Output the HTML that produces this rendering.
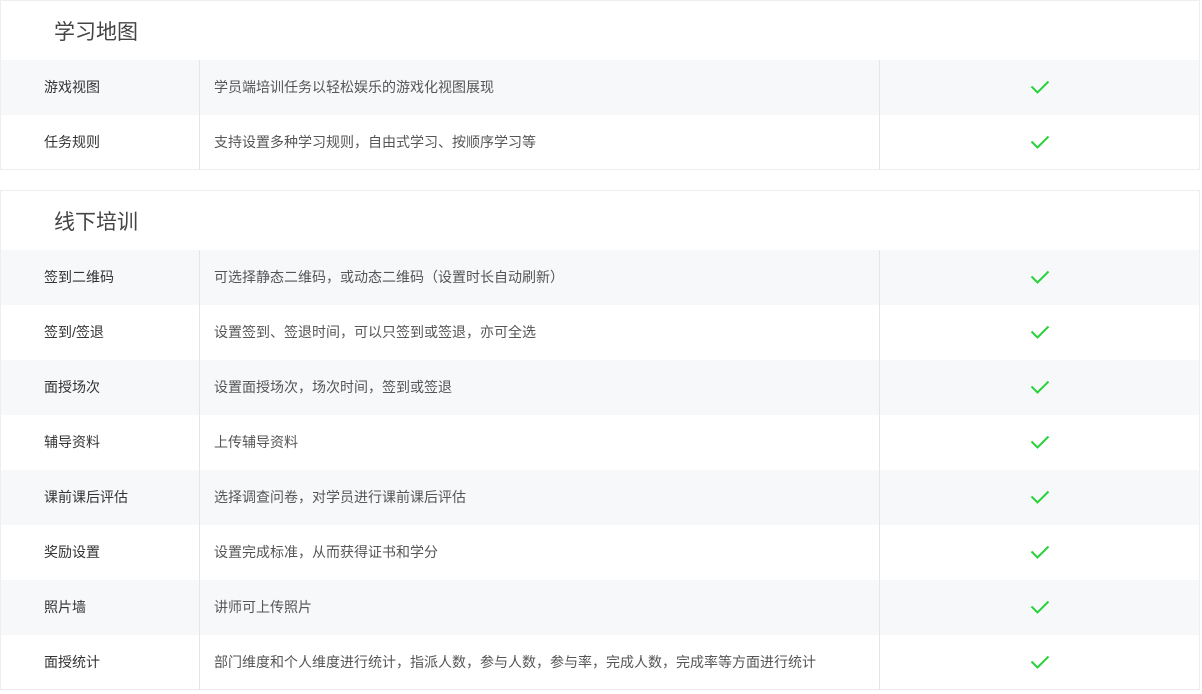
<!DOCTYPE html>
<html><head><meta charset="utf-8"><style>
body{margin:0;background:#fff;font-family:"Liberation Sans","Noto Sans CJK SC",sans-serif;width:1202px;height:694px;overflow:hidden}
.sec{position:absolute;left:0;width:1198px;border:1px solid #eee;background:#fff}
.t{height:59px;line-height:64px;padding-left:53px;font-size:21px;color:#444}
.r{height:55px;display:flex;font-size:14px;line-height:55px}
.r:nth-child(even){background:#f7f8fa}
.a{width:155px;padding-left:43px;color:#333;border-right:1px solid #e5e5e5}
.b{width:665px;padding-left:14px;color:#555;border-right:1px solid #e5e5e5}
.c{flex:1;position:relative}
.c svg{position:absolute;left:150px;top:20px}
</style></head><body>
<div class="sec" style="top:0;height:168px">
<div class="t">学习地图</div>
<div class="r"><div class="a">游戏视图</div><div class="b">学员端培训任务以轻松娱乐的游戏化视图展现</div><div class="c"></div></div>
<div class="r"><div class="a">任务规则</div><div class="b">支持设置多种学习规则，自由式学习、按顺序学习等</div><div class="c"></div></div>
</div>
<div class="sec" style="top:190px;height:498px">
<div class="t">线下培训</div>
<div class="r"><div class="a">签到二维码</div><div class="b">可选择静态二维码，或动态二维码（设置时长自动刷新）</div><div class="c"></div></div>
<div class="r"><div class="a">签到/签退</div><div class="b">设置签到、签退时间，可以只签到或签退，亦可全选</div><div class="c"></div></div>
<div class="r"><div class="a">面授场次</div><div class="b">设置面授场次，场次时间，签到或签退</div><div class="c"></div></div>
<div class="r"><div class="a">辅导资料</div><div class="b">上传辅导资料</div><div class="c"></div></div>
<div class="r"><div class="a">课前课后评估</div><div class="b">选择调查问卷，对学员进行课前课后评估</div><div class="c"></div></div>
<div class="r"><div class="a">奖励设置</div><div class="b">设置完成标准，从而获得证书和学分</div><div class="c"></div></div>
<div class="r"><div class="a">照片墙</div><div class="b">讲师可上传照片</div><div class="c"></div></div>
<div class="r"><div class="a">面授统计</div><div class="b">部门维度和个人维度进行统计，指派人数，参与人数，参与率，完成人数，完成率等方面进行统计</div><div class="c"></div></div>
</div>
<script>
document.querySelectorAll('.c').forEach(function(c){c.innerHTML='<svg width="20" height="16" viewBox="0 0 20 16"><path d="M1.5 6.5 L7.5 12.5 L18.5 1.5" fill="none" stroke="#27d33a" stroke-width="2"/></svg>';});
</script>
</body></html>
